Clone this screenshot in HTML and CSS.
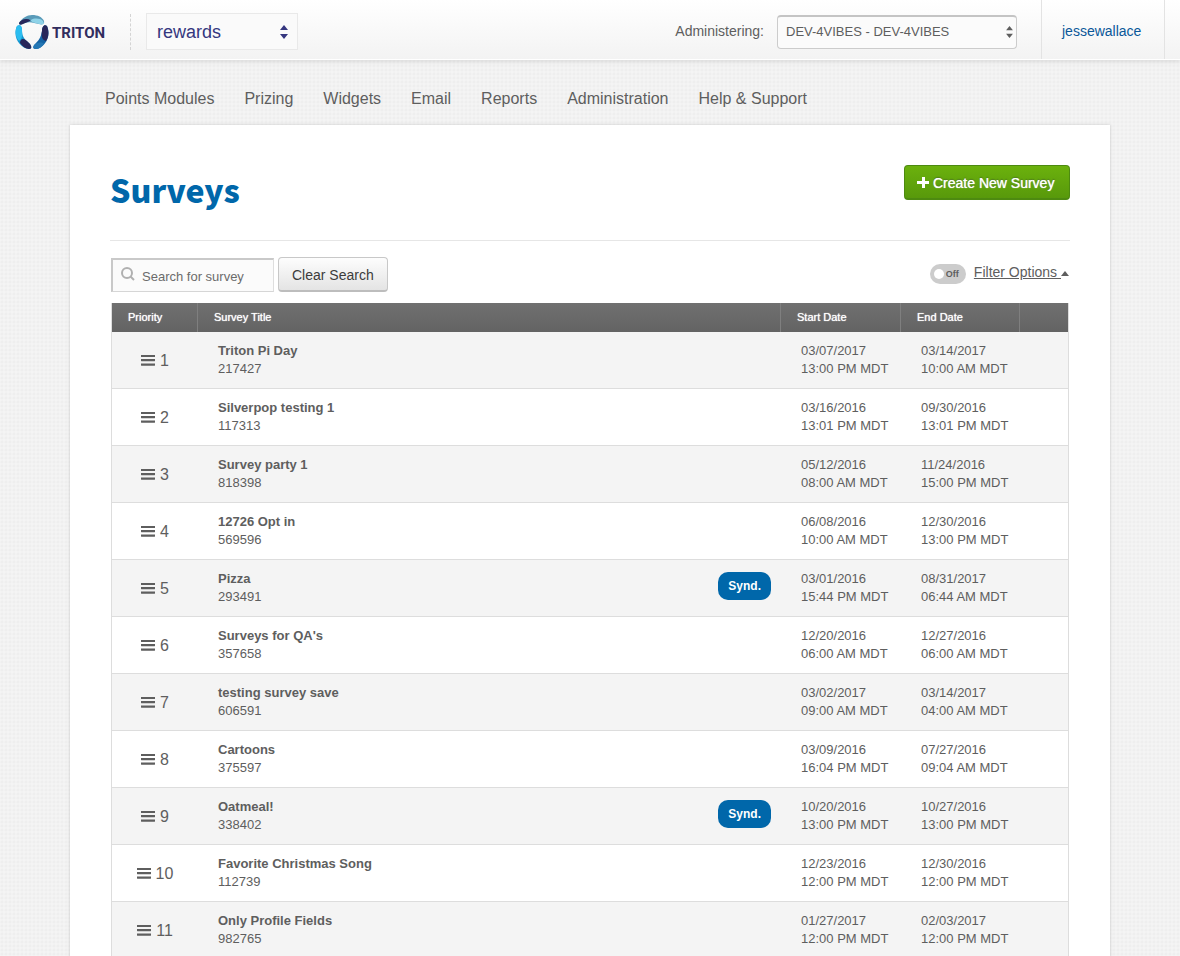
FILE: index.html
```html
<!DOCTYPE html>
<html lang="en">
<head>
<meta charset="utf-8">
<meta name="viewport" content="width=device-width, initial-scale=1">
<title>Surveys</title>
<link rel="stylesheet" href="styles.css">
</head>
<body>
<svg class="defs" width="0" height="0" aria-hidden="true">
  <symbol id="bars" viewBox="0 0 14 12"><path d="M.5 1h13a.5.5 0 0 1 0 2H.5a.5.5 0 0 1 0-2zM.5 5h13a.5.5 0 0 1 0 2.200H.5a.5.5 0 0 1 0-2.200zM.5 9.500h13a.5.5 0 0 1 0 2.200H.5a.5.5 0 0 1 0-2.200z"/></symbol>
  <symbol id="updown" viewBox="0 0 8 14"><path d="M4 0l4 5H0zM4 14l4-5H0z"/></symbol>
</svg>
<header class="topbar">
  <a class="brand" href="#" aria-label="Triton">
    <svg class="brand-mark" viewBox="0 0 34 34" aria-hidden="true">
      <path d="M4 8C7 3 12 0 17 0c6 0 10 2 12 6 1 3-2 4-5 3-5-1-9-3-14-1-3 1-6 3-6 0z" fill="#5a9bb9"/>
      <path d="M16 5c3-2 9-2 12 1 2 3 0 4-4 3-3-1-9-2-8-4z" fill="#8fd3e8"/>
      <path d="M4 8c1-2 4-4 7-4 3 0 5 1 4 2-2 1-5 2-7 3-2 1-4 1-4-1z" fill="#28275a"/>
      <path d="M2 11c3-2 5 0 5 4 0 6 2 9 7 13 3 3 3 6 0 6C5 33-3 22 2 11z" fill="#1596cf"/>
      <path d="M2 11c3-2 5 0 5 4 0 5 1 8-3 11C0 22 0 15 2 11z" fill="#2bbdf0"/>
      <path d="M8 24c2 0 4 2 6 4 3 3 3 6 0 6-3 0-7-3-9-6 0-2 1-4 3-4z" fill="#28275a"/>
      <path d="M32 11c5 11-3 22-11 23-4 0-3-3 0-6 4-4 5-7 6-12 0-4 2-7 5-5z" fill="#1464a5"/>
      <path d="M32 11c2 5 2 11-1 15-4-1-5-5-4-10 0-4 2-7 5-5z" fill="#28275a"/>
      <path d="M20 29c4-2 8-2 9 0-2 3-5 5-8 5-3 0-4-2-1-5z" fill="#2477b4"/>
    </svg>
    <span class="brand-name">TRITON</span>
  </a>
  <div class="select-box product">
    <select aria-label="Product"><option>rewards</option></select>
    <svg class="arrows" aria-hidden="true"><use href="#updown"/></svg>
  </div>
  <label class="admin-label" for="client">Administering:</label>
  <div class="select-box client">
    <select id="client"><option>DEV-4VIBES - DEV-4VIBES</option></select>
    <svg class="arrows" aria-hidden="true"><use href="#updown"/></svg>
  </div>
  <a class="user" href="#">jessewallace</a>
</header>

<div class="wrap">
  <nav class="nav">
    <a href="#">Points Modules</a>
    <a href="#">Prizing</a>
    <a href="#">Widgets</a>
    <a href="#">Email</a>
    <a href="#">Reports</a>
    <a href="#">Administration</a>
    <a href="#">Help &amp; Support</a>
  </nav>
  <main class="card">
    <div class="heading">
      <h1>Surveys</h1>
      <button class="create" type="button">
        <svg viewBox="0 0 12 12" aria-hidden="true"><path d="M5 0h3v4h4v3H8v4H5V7H0V4h5z"/></svg>
        Create New Survey
      </button>
    </div>
    <div class="tools">
      <div class="search">
        <svg viewBox="0 0 14 14" aria-hidden="true"><circle cx="6" cy="6" r="5"/><path d="M9.500 9.500L13 13"/></svg>
        <input type="text" placeholder="Search for survey" aria-label="Search for survey">
      </div>
      <button class="clear" type="button">Clear Search</button>
      <label class="toggle"><input type="checkbox" aria-label="Filter"><span>Off</span></label>
      <a class="filter" href="#"><span>Filter Options&nbsp;</span><svg viewBox="0 0 8 5" aria-hidden="true"><path d="M4 0l4 5H0z"/></svg></a>
    </div>
    <table class="surveys">
      <thead>
        <tr><th class="c-priority">Priority</th><th>Survey Title</th><th class="c-start">Start Date</th><th class="c-end">End Date</th><th class="c-menu"></th></tr>
      </thead>
      <tbody>
        <tr><td class="prio"><svg><use href="#bars"/></svg>1</td><td><b>Triton Pi Day</b><br>217427</td><td>03/07/2017<br>13:00 PM MDT</td><td>03/14/2017<br>10:00 AM MDT</td><td></td></tr>
        <tr><td class="prio"><svg><use href="#bars"/></svg>2</td><td><b>Silverpop testing 1</b><br>117313</td><td>03/16/2016<br>13:01 PM MDT</td><td>09/30/2016<br>13:01 PM MDT</td><td></td></tr>
        <tr><td class="prio"><svg><use href="#bars"/></svg>3</td><td><b>Survey party 1</b><br>818398</td><td>05/12/2016<br>08:00 AM MDT</td><td>11/24/2016<br>15:00 PM MDT</td><td></td></tr>
        <tr><td class="prio"><svg><use href="#bars"/></svg>4</td><td><b>12726 Opt in</b><br>569596</td><td>06/08/2016<br>10:00 AM MDT</td><td>12/30/2016<br>13:00 PM MDT</td><td></td></tr>
        <tr><td class="prio"><svg><use href="#bars"/></svg>5</td><td><span class="synd">Synd.</span><b>Pizza</b><br>293491</td><td>03/01/2016<br>15:44 PM MDT</td><td>08/31/2017<br>06:44 AM MDT</td><td></td></tr>
        <tr><td class="prio"><svg><use href="#bars"/></svg>6</td><td><b>Surveys for QA's</b><br>357658</td><td>12/20/2016<br>06:00 AM MDT</td><td>12/27/2016<br>06:00 AM MDT</td><td></td></tr>
        <tr><td class="prio"><svg><use href="#bars"/></svg>7</td><td><b>testing survey save</b><br>606591</td><td>03/02/2017<br>09:00 AM MDT</td><td>03/14/2017<br>04:00 AM MDT</td><td></td></tr>
        <tr><td class="prio"><svg><use href="#bars"/></svg>8</td><td><b>Cartoons</b><br>375597</td><td>03/09/2016<br>16:04 PM MDT</td><td>07/27/2016<br>09:04 AM MDT</td><td></td></tr>
        <tr><td class="prio"><svg><use href="#bars"/></svg>9</td><td><span class="synd">Synd.</span><b>Oatmeal!</b><br>338402</td><td>10/20/2016<br>13:00 PM MDT</td><td>10/27/2016<br>13:00 PM MDT</td><td></td></tr>
        <tr><td class="prio"><svg><use href="#bars"/></svg>10</td><td><b>Favorite Christmas Song</b><br>112739</td><td>12/23/2016<br>12:00 PM MDT</td><td>12/30/2016<br>12:00 PM MDT</td><td></td></tr>
        <tr><td class="prio"><svg><use href="#bars"/></svg>11</td><td><b>Only Profile Fields</b><br>982765</td><td>01/27/2017<br>12:00 PM MDT</td><td>02/03/2017<br>12:00 PM MDT</td><td></td></tr>
      </tbody>
    </table>
  </main>
</div>
</body>
</html>
```
FILE: styles.css
```css
* { box-sizing: border-box; }
body {
  margin: 0;
  color: #5e5e5e;
  font: 13px/18px "Liberation Sans", Arial, sans-serif;
  background: #f4f4f4 radial-gradient(circle, #eee 1px, transparent 2px) 0 0 / 4px 4px;
}
button, input, select { font: inherit; color: inherit; }
a { color: inherit; text-decoration: none; }
.defs { position: absolute; }

/* Top bar */
.topbar {
  display: flex;
  align-items: center;
  height: 60px;
  padding: 0 15px;
  background: linear-gradient(#fff, #f3f3f3);
  border-bottom: 1px solid #fff;
  box-shadow: 0 1px 5px rgba(0, 0, 0, .12);
}
.brand {
  display: flex;
  align-items: center;
  gap: 3px;
  width: 116px;
  height: 36px;
  margin-top: 4px;
  border-right: 1px dashed #d4d4d4;
}
.brand-mark { width: 34px; height: 34px; }
.brand-name { padding-top: 3px; color: #312d5e; font: bold 15px/20px "Roboto", sans-serif; }
.select-box { display: grid; align-items: center; }
.select-box > * { grid-area: 1 / 1; }
.select-box select { appearance: none; width: 100%; height: 100%; outline: 0; }
.arrows { justify-self: end; pointer-events: none; fill: currentColor; }
.product { width: 152px; height: 37px; margin: 4px 0 0 15px; color: #35377f; }
.product select { padding: 0 10px; border: 1px solid #e9e9e9; background: #fafafa; font-size: 18px; }
.product .arrows { width: 8px; height: 14px; margin-right: 10px; }
.admin-label { margin: 2px 13px 0 auto; font-size: 14px; }
.client { width: 240px; height: 34px; margin: 4px 24px 0 0; }
.client select { padding: 0 8px; border: 1px solid #ccc; border-top: 2px solid #c4c4c4; border-radius: 4px; background: #fbfbfb; }
.client .arrows { width: 7px; height: 12px; margin-right: 4px; }
.user {
  align-self: stretch;
  min-width: 124px;
  padding: 0 20px;
  border: solid #e3e3e3;
  border-width: 0 1px;
  color: #0a5799;
  font-size: 14px;
  line-height: 62px;
}

/* Navigation */
.wrap { max-width: 1040px; margin: 0 auto; }
.nav { display: flex; gap: 30px; padding: 29px 35px 16px; font-size: 16px; line-height: 20px; }

/* Content */
.card { padding: 40px 40px 20px; background: #fff; box-shadow: 0 0 3px rgba(0, 0, 0, .18); }
.heading { display: flex; justify-content: space-between; align-items: flex-start; height: 76px; border-bottom: 1px solid #e6e6e6; }
h1 { margin: 0; color: #0067aa; font: 900 32px/48px "Noto Sans CJK SC", sans-serif; }
.create {
  display: flex;
  align-items: center;
  gap: 4px;
  height: 35px;
  padding: 2px 13px 0 12px;
  min-width: 166px;
  border: 1px solid #4d8a10;
  border-bottom-width: 2px;
  border-radius: 4px;
  background: linear-gradient(#6bb10d, #58990b);
  color: #fff;
  font-size: 14px;
  text-shadow: 0 0 1px #fff, 0 -1px 1px #3c6d08;
}
.create svg { width: 12px; height: 12px; fill: #fff; }
.tools { display: flex; height: 62px; padding: 16px 1px 0; }
.search { display: grid; align-items: center; width: 163px; height: 34px; margin-top: 1px; }
.search > * { grid-area: 1 / 1; }
.search svg { z-index: 1; width: 14px; height: 14px; margin: 0 0 3px 10px; fill: none; stroke: #b0b0b0; stroke-width: 2; }
.search input { width: 100%; height: 100%; padding: 2px 4px 0 29px; border: 1px solid #d6d6d6; border-width: 2px 1px 1px 2px; border-color: #c9c9c9 #dedede #d6d6d6 #c9c9c9; background: #fbfbfb; outline: 0; }
.search input::placeholder { color: #6b6b6b; opacity: 1; }
.clear {
  height: 35px;
  margin-left: 4px;
  padding: 2px 13px 0;
  border: 1px solid #c8c8c8;
  border-bottom: 2px solid #bdbdbd;
  border-radius: 4px;
  background: linear-gradient(#fdfdfd, #e4e4e4);
  color: #3c3c3c;
  font-size: 14px;
}
.toggle { display: flex; align-items: center; gap: 2px; width: 36px; height: 20px; margin: 7px 8px 0 auto; padding: 0 4px; border-radius: 10px; background: #ccc; font: bold 9px/20px "Liberation Sans", sans-serif; }
.toggle input { appearance: none; width: 10px; height: 10px; margin: 0; border-radius: 50%; background: #fff; }
.filter { display: flex; align-items: center; height: 18px; margin-top: 6px; font-size: 14px; }
.filter span { text-decoration: underline; }
.filter svg { width: 8px; height: 5px; margin-top: 2px; fill: #5e5e5e; }

/* Survey table */
.surveys { width: calc(100% - 2px); margin: 0 1px; border: 1px solid #ddd; border-top: 0; border-collapse: separate; border-spacing: 0; table-layout: fixed; }
.surveys th { height: 29px; padding: 0 16px 2px; border-right: 1px solid #7f7f7f; background: linear-gradient(#707070, #636363); color: #fff; font-weight: normal; font-size: 11px; text-align: left; text-shadow: 0 0 1px #fff; }
.surveys th:last-child { border-right: 0; }
.c-priority { width: 86px; }
.c-start { width: 120px; }
.c-end { width: 119px; }
.c-menu { width: 48px; }
.surveys td { height: 57px; padding: 10px 10px 10px 20px; border-bottom: 1px solid #ddd; vertical-align: top; }
.surveys tbody tr:nth-child(odd) { background: #f4f4f4; }
.surveys .prio { padding: 2px 0 0; font-size: 16px; text-align: center; vertical-align: middle; white-space: nowrap; }
.prio svg { width: 14px; height: 12px; margin-right: 5px; fill: #5e5e5e; }
.synd { float: right; margin-top: 2px; padding: 0 10px; border-radius: 10px; background: #0067aa; color: #fff; font-weight: bold; font-size: 12px; line-height: 28px; }
```
